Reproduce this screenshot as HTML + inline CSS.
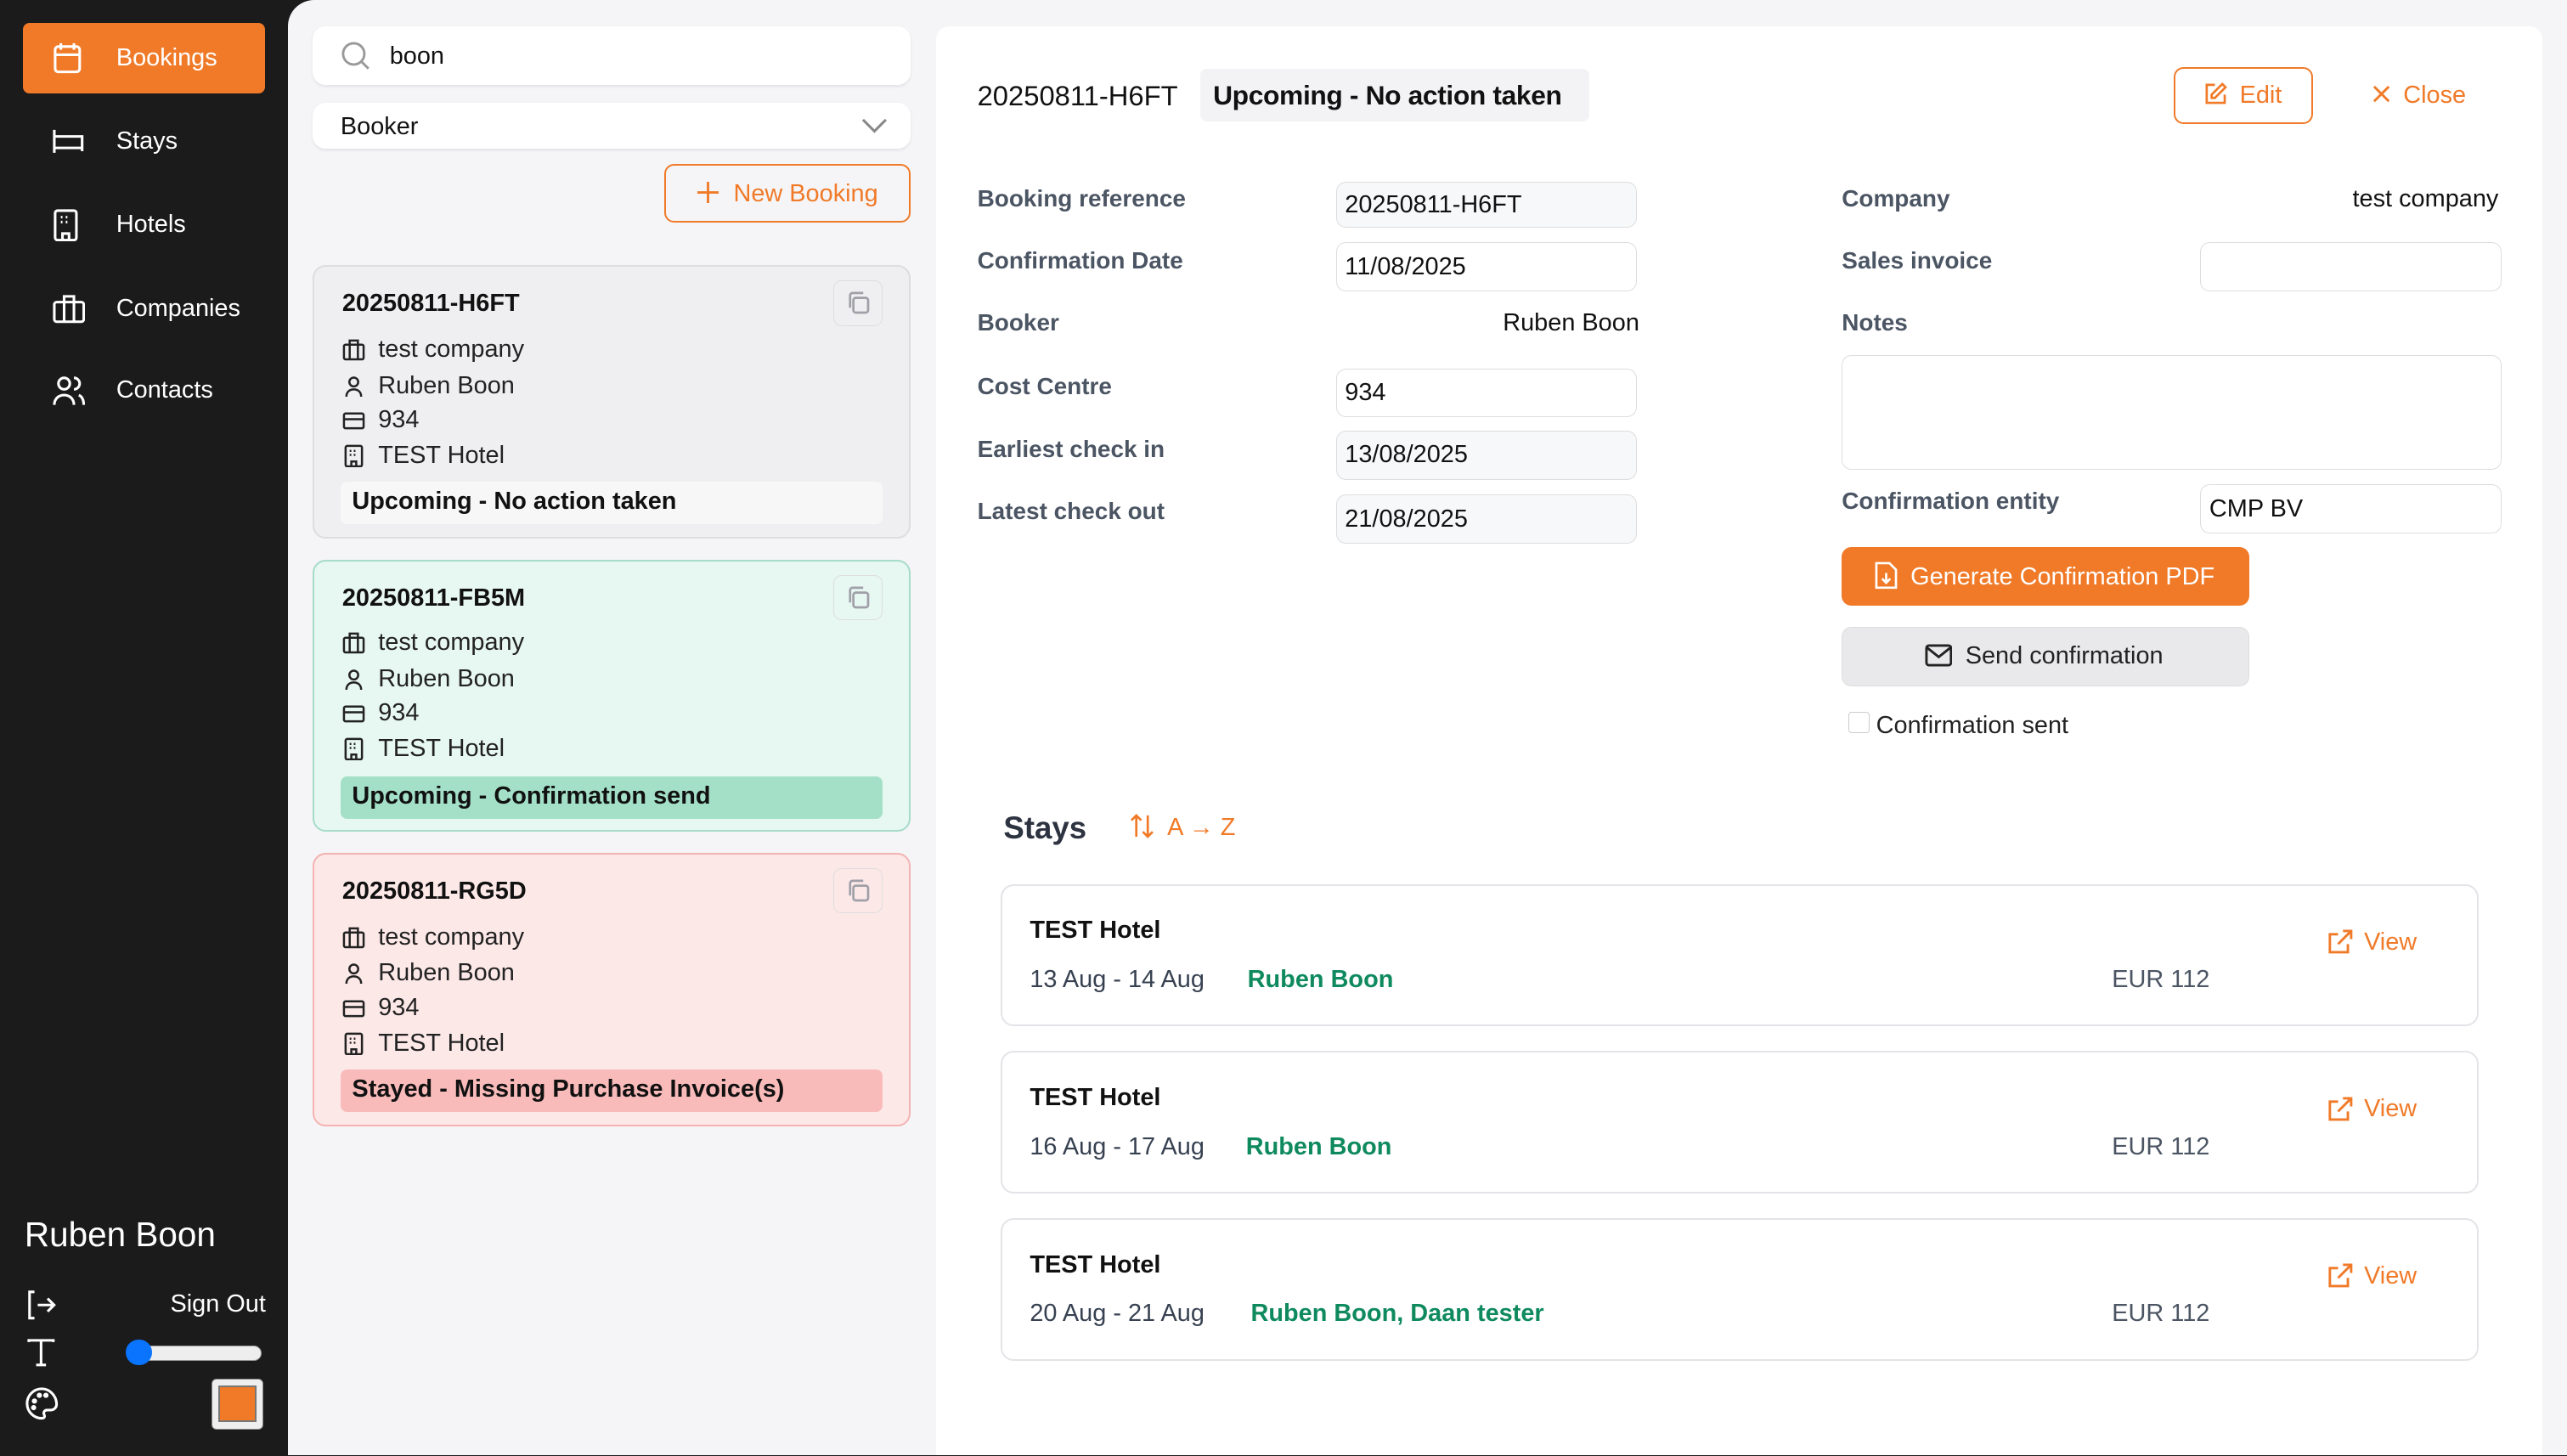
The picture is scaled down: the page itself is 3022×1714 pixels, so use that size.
<!DOCTYPE html>
<html><head><meta charset="utf-8">
<style>
html{zoom:1.9273;overflow:hidden;background:#1b1b1b}
*{box-sizing:border-box;margin:0;padding:0}
body{width:1568px;height:889px;overflow:hidden;background:#1b1b1b;font-family:"Liberation Sans",sans-serif;color:#111;position:relative}
.a{position:absolute}
.main{left:176px;top:0;width:1392px;height:889px;background:#f5f5f7;border-top-left-radius:16px}
.nav{left:14px;width:148px;height:43px;color:#fff;font-size:15px;display:flex;align-items:center;border-radius:4px}
.nav svg{position:absolute;left:18px}
.nav span{position:absolute;left:57px}
.box{background:#fff;border-radius:8px;box-shadow:0 1px 2px rgba(0,0,0,.08)}
.card{left:191px;width:365px;border-radius:8px;border:1.5px solid #ddd}
.card .t{position:absolute;left:17px;top:14px;font-weight:bold;font-size:15px}
.card .cp{position:absolute;left:317px;top:8px;width:30px;height:28px;border:1px solid #ddd;border-radius:5px;display:flex;align-items:center;justify-content:center}
.card .l{position:absolute;left:17px;font-size:15px;display:flex;align-items:center;gap:8px;color:#222}
.card .s{position:absolute;left:16px;top:131px;width:331px;height:26px;border-radius:4px;font-weight:bold;font-size:15px;padding:4px 7px;white-space:nowrap}
.lab{font-size:14.5px;color:#4b5563;font-weight:bold}
.in{border:1px solid #ddd;border-radius:6px;font-size:15px;padding:6px 5px;height:30px}
.g{background:#f7f8fa}
.w{background:#fff}
.sc{left:611px;width:903px;height:87px;background:#fff;border:1.5px solid #e4e4e8;border-radius:8px}
.sc .h{position:absolute;left:17px;top:19px;font-weight:bold;font-size:15px}
.sc .d{position:absolute;left:17px;top:49px;font-size:15px;color:#374151}
.sc .n{position:absolute;top:49px;font-size:15px;color:#0f8a5f;font-weight:bold}
.sc .e{position:absolute;left:678px;top:49px;font-size:15px;color:#4b5563}
.sc .v{position:absolute;left:809px;top:26px;font-size:15px;color:#f07a28;display:flex;gap:7px;align-items:center}
</style></head><body>
<svg width="0" height="0" style="position:absolute">
<defs>
<g id="ib" fill="none" stroke="#222" stroke-width="1.3"><rect x="1" y="4" width="12" height="9" rx="1"/><path d="M4.5 4V1.5h5V4M4.5 4v9M9.5 4v9"/></g>
<g id="ip" fill="none" stroke="#222" stroke-width="1.3"><circle cx="7" cy="4.5" r="2.7"/><path d="M2.5 13.5c0-3 2-4.5 4.5-4.5s4.5 1.5 4.5 4.5"/></g>
<g id="ic" fill="none" stroke="#222" stroke-width="1.3"><rect x="1" y="3" width="12" height="9" rx="1"/><path d="M1 6.5h12"/></g>
<g id="ih" fill="none" stroke="#222" stroke-width="1.3"><rect x="2" y="1" width="10" height="12.5" rx="1"/><path d="M4.5 4h1M7 4h1M9.5 4h0M4.5 6.5h1M7 6.5h1M5.5 13.5v-3h3v3"/></g>
<g id="icp" fill="none" stroke="#a0a0a8" stroke-width="1.4"><rect x="5" y="5" width="9" height="9" rx="1.5"/><path d="M3 11V3.5A1.5 1.5 0 014.5 2H11"/></g>
</defs></svg>

<div class="a nav" style="top:14px;background:#f07a28"><svg width="18" height="20" viewBox="0 0 18 20" fill="none" stroke="#fff" stroke-width="1.6"><rect x="1.5" y="3" width="15" height="15.5" rx="2"/><path d="M5 1v4M13 1v4M1.5 8h15"/></svg><span>Bookings</span></div>
<div class="a nav" style="top:65px"><svg width="20" height="16" viewBox="0 0 20 16" fill="none" stroke="#fff" stroke-width="1.6"><path d="M1 1v14M1 5h17v9M1 12h17"/></svg><span>Stays</span></div>
<div class="a nav" style="top:116px"><svg width="16" height="20" viewBox="0 0 16 20" fill="none" stroke="#fff" stroke-width="1.6"><rect x="1.5" y="1" width="13" height="18" rx="1.5"/><path d="M5 5h1M8 5h1M11 5h0M5 8h1M8 8h1M6 19v-4h4v4" /></svg><span>Hotels</span></div>
<div class="a nav" style="top:167px"><svg width="20" height="18" viewBox="0 0 20 18" fill="none" stroke="#fff" stroke-width="1.6"><rect x="1" y="5" width="18" height="12" rx="1.5"/><path d="M7 5V1.5h6V5M7 5v12M13 5v12"/></svg><span>Companies</span></div>
<div class="a nav" style="top:217px"><svg width="20" height="20" viewBox="0 0 20 20" fill="none" stroke="#fff" stroke-width="1.6"><circle cx="7" cy="6" r="3.5"/><path d="M1 19c0-4 3-6 6-6s6 2 6 6M13 2.5a3.5 3.5 0 010 7M16 13c2 1 3 3 3 6"/></svg><span>Contacts</span></div>

<div class="a" style="left:15px;top:742px;color:#fff;font-size:21px">Ruben Boon</div>
<svg class="a" style="left:15px;top:787px" width="20" height="20" viewBox="0 0 20 20" fill="none" stroke="#fff" stroke-width="1.6"><path d="M6 2H3v16h3M8 10h10M14 6l4 4-4 4"/></svg>
<div class="a" style="left:104px;top:788px;color:#fff;font-size:15px">Sign Out</div>
<svg class="a" style="left:16px;top:817px" width="18" height="18" viewBox="0 0 18 18" fill="none" stroke="#fff" stroke-width="1.6"><path d="M1.5 2.5V1.5h15v1M9 1.5v15M6 16.5h6"/></svg>
<div class="a" style="left:78px;top:822px;width:82px;height:9px;background:#eee;border:1px solid #999;border-radius:5px"></div>
<div class="a" style="left:77px;top:818px;width:16px;height:16px;background:#0a74ff;border-radius:50%"></div>
<svg class="a" style="left:15px;top:847px" width="21" height="21" viewBox="0 0 21 21" fill="none" stroke="#fff" stroke-width="1.6"><path d="M10.5 1.5a9 9 0 100 18c1.5 0 2-1 1.5-2-.8-1.5 0-3 1.8-3H16a3.5 3.5 0 003.5-3.5c0-5-4-9.5-9-9.5z"/><circle cx="6" cy="9" r=".8" fill="#fff"/><circle cx="9" cy="5.5" r=".8" fill="#fff"/><circle cx="13" cy="5.5" r=".8" fill="#fff"/><circle cx="5.5" cy="13" r=".8" fill="#fff"/></svg>
<div class="a" style="left:129px;top:842px;width:32px;height:31px;background:#eee;border:1px solid #888;border-radius:3px;padding:4px"><div style="width:100%;height:100%;background:#f07a28;border:1.5px solid #777"></div></div>

<div class="a main"></div>

<div class="a box" style="left:191px;top:16px;width:365px;height:36px"></div>
<svg class="a" style="left:208px;top:25px" width="18" height="18" viewBox="0 0 18 18" fill="none" stroke="#999" stroke-width="1.5"><circle cx="8" cy="8" r="6.5"/><path d="M13 13l4 4"/></svg>
<div class="a" style="left:238px;top:26px;font-size:15px">boon</div>
<div class="a box" style="left:191px;top:63px;width:365px;height:28px"></div>
<div class="a" style="left:208px;top:69px;font-size:15px">Booker</div>
<svg class="a" style="left:526px;top:72px" width="16" height="10" viewBox="0 0 16 10" fill="none" stroke="#888" stroke-width="1.6"><path d="M1 1l7 7 7-7"/></svg>
<div class="a" style="left:406px;top:100px;width:150px;height:36px;border:1.5px solid #f07a28;border-radius:6px;color:#f07a28;font-size:15px;padding:9px 0 0 19px;white-space:nowrap"><svg width="13" height="13" viewBox="0 0 13 13" stroke="#f07a28" stroke-width="1.5" style="vertical-align:-1px;margin-right:9px"><path d="M6.5 0v13M0 6.5h13"/></svg>New Booking</div>

<div class="a card" style="top:162px;height:167px;background:#efeff1">
<div class="t">20250811-H6FT</div><div class="cp"><svg width="16" height="16"><use href="#icp"/></svg></div>
<div class="l" style="top:42px"><svg width="14" height="14"><use href="#ib"/></svg>test company</div><div class="l" style="top:64px"><svg width="14" height="14"><use href="#ip"/></svg>Ruben Boon</div><div class="l" style="top:85px"><svg width="14" height="14"><use href="#ic"/></svg>934</div><div class="l" style="top:107px"><svg width="14" height="14"><use href="#ih"/></svg>TEST Hotel</div>
<div class="s" style="background:#f7f7f8">Upcoming - No action taken</div></div>

<div class="a card" style="top:342px;height:166px;background:#e7f7f1;border-color:#a6dcc8">
<div class="t">20250811-FB5M</div><div class="cp"><svg width="16" height="16"><use href="#icp"/></svg></div>
<div class="l" style="top:41px"><svg width="14" height="14"><use href="#ib"/></svg>test company</div><div class="l" style="top:63px"><svg width="14" height="14"><use href="#ip"/></svg>Ruben Boon</div><div class="l" style="top:84px"><svg width="14" height="14"><use href="#ic"/></svg>934</div><div class="l" style="top:106px"><svg width="14" height="14"><use href="#ih"/></svg>TEST Hotel</div>
<div class="s" style="background:#a4e0c8">Upcoming - Confirmation send</div></div>

<div class="a card" style="top:521px;height:167px;background:#fde8e8;border-color:#f4b2b2">
<div class="t">20250811-RG5D</div><div class="cp"><svg width="16" height="16"><use href="#icp"/></svg></div>
<div class="l" style="top:42px"><svg width="14" height="14"><use href="#ib"/></svg>test company</div><div class="l" style="top:64px"><svg width="14" height="14"><use href="#ip"/></svg>Ruben Boon</div><div class="l" style="top:85px"><svg width="14" height="14"><use href="#ic"/></svg>934</div><div class="l" style="top:107px"><svg width="14" height="14"><use href="#ih"/></svg>TEST Hotel</div>
<div class="s" style="background:#f9baba">Stayed - Missing Purchase Invoice(s)</div></div>

<div class="a" style="left:572px;top:16px;width:981px;height:873px;background:#fff;border-radius:8px 8px 0 0"></div>
<div class="a" style="left:597px;top:49px;font-size:17px">20250811-H6FT</div>
<div class="a" style="left:733px;top:42px;width:238px;height:32px;background:#f3f3f5;border-radius:4px;font-weight:bold;font-size:16.5px;padding:7px 8px;white-space:nowrap;letter-spacing:-0.2px">Upcoming - No action taken</div>
<div class="a" style="left:1328px;top:41px;width:85px;height:35px;border:1.5px solid #f07a28;border-radius:6px;color:#f07a28;font-size:15px;padding:8px 0 0 17px;white-space:nowrap"><svg width="15" height="15" viewBox="0 0 15 15" fill="none" stroke="#f07a28" stroke-width="1.4" style="vertical-align:-2px;margin-right:7px"><path d="M7 2H2v11h11V8M11.5 1.5l2 2L7 10H5V8z"/></svg>Edit</div>
<div class="a" style="left:1449px;top:50px;color:#f07a28;font-size:15px;white-space:nowrap"><svg width="11" height="11" viewBox="0 0 11 11" stroke="#f07a28" stroke-width="1.5" style="margin-right:8px"><path d="M1 1l9 9M10 1l-9 9"/></svg>Close</div>

<div class="a lab" style="left:597px;top:113px">Booking reference</div>
<div class="a lab" style="left:597px;top:151px">Confirmation Date</div>
<div class="a lab" style="left:597px;top:189px">Booker</div>
<div class="a lab" style="left:597px;top:228px">Cost Centre</div>
<div class="a lab" style="left:597px;top:266px">Earliest check in</div>
<div class="a lab" style="left:597px;top:304px">Latest check out</div>
<div class="a in g" style="left:816px;top:111px;width:184px;height:28px;padding-top:5px">20250811-H6FT</div>
<div class="a in w" style="left:816px;top:148px;width:184px">11/08/2025</div>
<div class="a" style="left:918px;top:189px;font-size:15px">Ruben Boon</div>
<div class="a in w" style="left:816px;top:225px;width:184px">934</div>
<div class="a in g" style="left:816px;top:263px;width:184px">13/08/2025</div>
<div class="a in g" style="left:816px;top:302px;width:184px">21/08/2025</div>

<div class="a lab" style="left:1125px;top:113px">Company</div>
<div class="a" style="left:1437px;top:113px;font-size:15px">test company</div>
<div class="a lab" style="left:1125px;top:151px">Sales invoice</div>
<div class="a in w" style="left:1344px;top:148px;width:184px"></div>
<div class="a lab" style="left:1125px;top:189px">Notes</div>
<div class="a in w" style="left:1125px;top:217px;width:403px;height:70px"></div>
<div class="a lab" style="left:1125px;top:298px">Confirmation entity</div>
<div class="a in w" style="left:1344px;top:296px;width:184px">CMP BV</div>
<div class="a" style="left:1125px;top:334px;width:249px;height:36px;background:#f07a28;border-radius:6px;color:#fff;font-size:15px;padding:9px 0 0 20px;white-space:nowrap"><svg width="14" height="17" viewBox="0 0 14 17" fill="none" stroke="#fff" stroke-width="1.4" style="vertical-align:-3px;margin-right:8px"><path d="M1 1h8l4 4v11H1z M7 7v6M4.5 10.5L7 13l2.5-2.5"/></svg>Generate Confirmation PDF</div>
<div class="a" style="left:1125px;top:383px;width:249px;height:36px;background:#e9e9ec;border:1px solid #ddd;border-radius:6px;font-size:15px;padding:9px 0 0 50px;color:#222;white-space:nowrap"><svg width="17" height="14" viewBox="0 0 17 14" fill="none" stroke="#222" stroke-width="1.5" style="vertical-align:-2px;margin-right:8px"><rect x="1" y="1" width="15" height="12" rx="1.5"/><path d="M1 2l7.5 6L16 2"/></svg>Send confirmation</div>
<div class="a" style="left:1129px;top:435px;width:13px;height:13px;border:1px solid #ccc;border-radius:2px"></div>
<div class="a" style="left:1146px;top:435px;font-size:15px;color:#222">Confirmation sent</div>

<div class="a" style="left:613px;top:495px;font-size:19px;font-weight:bold;color:#2d3340">Stays</div>
<div class="a" style="left:690px;top:497px;font-size:15px;color:#f07a28;white-space:nowrap"><svg width="15" height="15" viewBox="0 0 15 15" fill="none" stroke="#f07a28" stroke-width="1.4" style="vertical-align:-2px;margin-right:8px"><path d="M4 14V1M1 4l3-3 3 3M11 1v13M8 11l3 3 3-3"/></svg>A → Z</div>

<div class="a sc" style="top:540px"><div class="h">TEST Hotel</div><div class="d">13 Aug - 14 Aug</div><div class="n" style="left:150px">Ruben Boon</div><div class="e">EUR 112</div><div class="v"><svg width="16" height="16" viewBox="0 0 16 16" fill="none" stroke="#f07a28" stroke-width="1.5"><path d="M7 3H2v11h11V9M10 1h5v5M15 1L7 9"/></svg>View</div></div>
<div class="a sc" style="top:642px"><div class="h">TEST Hotel</div><div class="d">16 Aug - 17 Aug</div><div class="n" style="left:149px">Ruben Boon</div><div class="e">EUR 112</div><div class="v"><svg width="16" height="16" viewBox="0 0 16 16" fill="none" stroke="#f07a28" stroke-width="1.5"><path d="M7 3H2v11h11V9M10 1h5v5M15 1L7 9"/></svg>View</div></div>
<div class="a sc" style="top:744px"><div class="h">TEST Hotel</div><div class="d">20 Aug - 21 Aug</div><div class="n" style="left:152px">Ruben Boon, Daan tester</div><div class="e">EUR 112</div><div class="v"><svg width="16" height="16" viewBox="0 0 16 16" fill="none" stroke="#f07a28" stroke-width="1.5"><path d="M7 3H2v11h11V9M10 1h5v5M15 1L7 9"/></svg>View</div></div>

</body></html>
